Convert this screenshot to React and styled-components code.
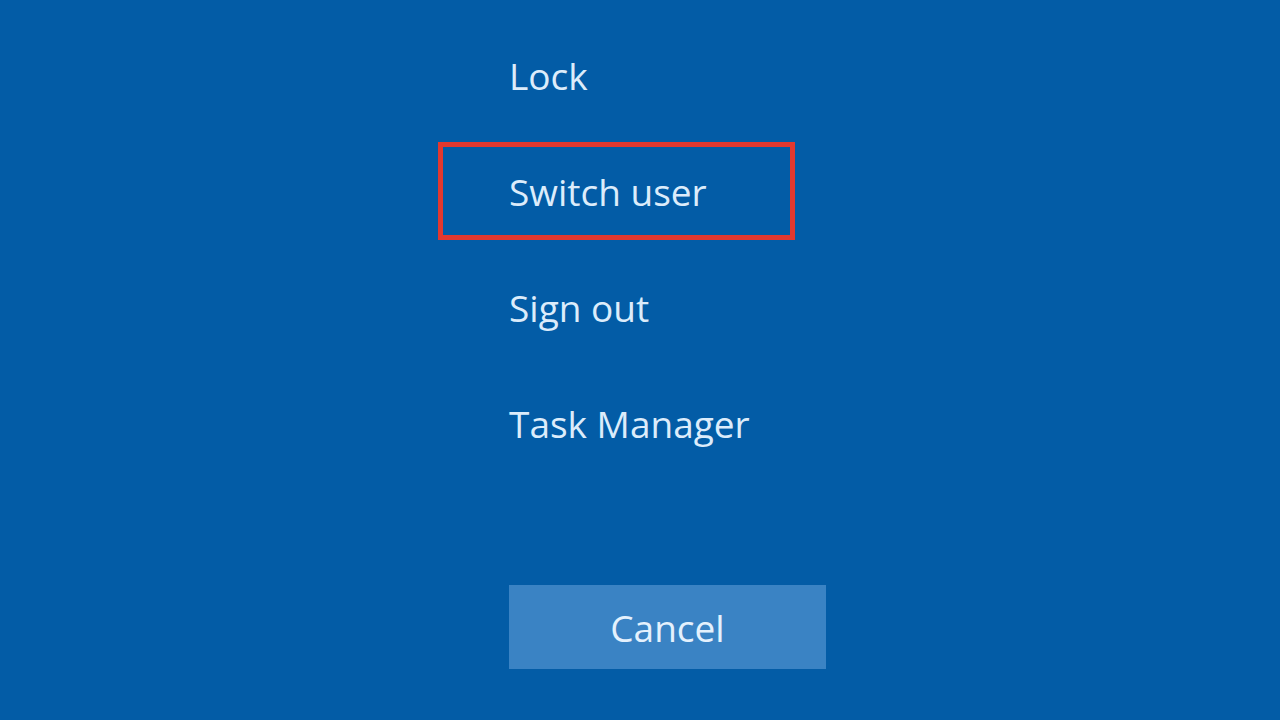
import React from "react";
import styled, { createGlobalStyle } from "styled-components";

const GlobalStyle = createGlobalStyle`
  html, body {
    margin: 0;
    padding: 0;
    background: #035ca6;
  }
`;

const Screen = styled.div`
  width: 1280px;
  height: 720px;
  background: #035ca6;
  display: flex;
  flex-direction: column;
  align-items: flex-start;
  padding: 26px 0 0 438px;
  box-sizing: border-box;
  font-family: "Open Sans", "Noto Sans", sans-serif;
  overflow: hidden;
`;

const Menu = styled.div`
  display: flex;
  flex-direction: column;
  gap: 18px;
`;

const Item = styled.div`
  width: 357px;
  height: 98px;
  box-sizing: border-box;
  border: 5px solid ${(p) => (p.$selected ? "#e2382f" : "transparent")};
  padding-left: 66px;
  display: flex;
  align-items: center;
  color: #dcecfb;
  font-size: 37px;
  white-space: nowrap;
  cursor: pointer;
`;

const CancelButton = styled.button`
  margin: 113px 0 0 71px;
  width: 317px;
  height: 84px;
  border: none;
  background: #3a83c4;
  color: #e4f1fd;
  font-family: inherit;
  font-size: 37px;
  cursor: pointer;
`;

const items = ["Lock", "Switch user", "Sign out", "Task Manager"];

const App = () => {
  return (
    <>
      <GlobalStyle />
      <Screen>
        <Menu>
          {items.map((label) => (
            <Item key={label} $selected={label === "Switch user"}>
              {label}
            </Item>
          ))}
        </Menu>
        <CancelButton>Cancel</CancelButton>
      </Screen>
    </>
  );
};

export default App;
